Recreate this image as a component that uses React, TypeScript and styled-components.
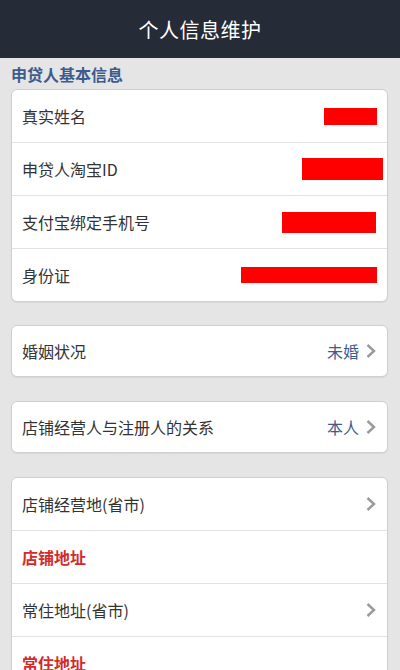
import styled, { createGlobalStyle } from "styled-components";

const GlobalStyle = createGlobalStyle`
  html, body {
    margin: 0;
    padding: 0;
    background: #e5e5e5;
    font-family: "Noto Sans CJK SC", "Noto Sans", sans-serif;
  }
`;

const Page = styled.div`
  width: 400px;
  min-height: 670px;
  background: #e5e5e5;
  overflow: hidden;
`;

const Header = styled.header`
  height: 58px;
  background: #262b38;
  color: #ffffff;
  font-size: 20px;
  display: flex;
  align-items: center;
  justify-content: center;
  letter-spacing: 0.5px;
`;

const Content = styled.div`
  padding: 0 12px 0 11px;
  display: flex;
  flex-direction: column;
`;

const SectionTitle = styled.div`
  height: 31px;
  display: flex;
  align-items: center;
  color: #3d5b8e;
  font-size: 16px;
  font-weight: bold;
  padding-top: 1px;
  box-sizing: border-box;
`;

const Card = styled.div<{ $gap?: number }>`
  background: #ffffff;
  border: 1px solid #cfcfcf;
  border-radius: 6px;
  margin-bottom: ${({ $gap }) => $gap ?? 24}px;
  box-shadow: 0 1px 1px rgba(0, 0, 0, 0.06);
`;

const Row = styled.div<{ $h?: number }>`
  height: ${({ $h }) => $h ?? 52}px;
  display: flex;
  align-items: center;
  justify-content: space-between;
  padding: 0 10px;
  border-top: 1px solid #e2e2e2;

  &:first-child {
    border-top: none;
  }
`;

const Label = styled.span<{ $red?: boolean }>`
  font-size: 16px;
  color: ${({ $red }) => ($red ? "#d22b2b" : "#333333")};
  font-weight: ${({ $red }) => ($red ? "bold" : "normal")};
`;

const Mask = styled.span<{ $w: number; $h: number; $shift?: number }>`
  display: block;
  width: ${({ $w }) => $w}px;
  height: ${({ $h }) => $h}px;
  background: #ff0000;
  margin-right: ${({ $shift }) => $shift ?? 0}px;
`;

const Right = styled.div`
  display: flex;
  align-items: center;
  gap: 6px;
`;

const Value = styled.span`
  font-size: 16px;
  color: #3d5b8e;
`;

const Chevron = () => (
  <svg width="12" height="16" viewBox="0 0 12 16">
    <polyline
      points="2.5,2 9,8 2.5,14"
      fill="none"
      stroke="#9a9a9a"
      strokeWidth="2.4"
      strokeLinejoin="miter"
    />
  </svg>
);

export default function App() {
  return (
    <Page>
      <GlobalStyle />
      <Header>个人信息维护</Header>
      <Content>
        <SectionTitle>申贷人基本信息</SectionTitle>
        <Card $gap={23}>
          <Row>
            <Label>真实姓名</Label>
            <Mask $w={53} $h={17} />
          </Row>
          <Row>
            <Label>申贷人淘宝ID</Label>
            <Mask $w={81} $h={22} $shift={-6} />
          </Row>
          <Row>
            <Label>支付宝绑定手机号</Label>
            <Mask $w={94} $h={21} $shift={1} />
          </Row>
          <Row>
            <Label>身份证</Label>
            <Mask $w={136} $h={16} />
          </Row>
        </Card>
        <Card>
          <Row $h={50}>
            <Label>婚姻状况</Label>
            <Right>
              <Value>未婚</Value>
              <Chevron />
            </Right>
          </Row>
        </Card>
        <Card>
          <Row $h={50}>
            <Label>店铺经营人与注册人的关系</Label>
            <Right>
              <Value>本人</Value>
              <Chevron />
            </Right>
          </Row>
        </Card>
        <Card $gap={0}>
          <Row>
            <Label>店铺经营地(省市)</Label>
            <Chevron />
          </Row>
          <Row>
            <Label $red>店铺地址</Label>
          </Row>
          <Row>
            <Label>常住地址(省市)</Label>
            <Chevron />
          </Row>
          <Row>
            <Label $red>常住地址</Label>
          </Row>
        </Card>
      </Content>
    </Page>
  );
}
